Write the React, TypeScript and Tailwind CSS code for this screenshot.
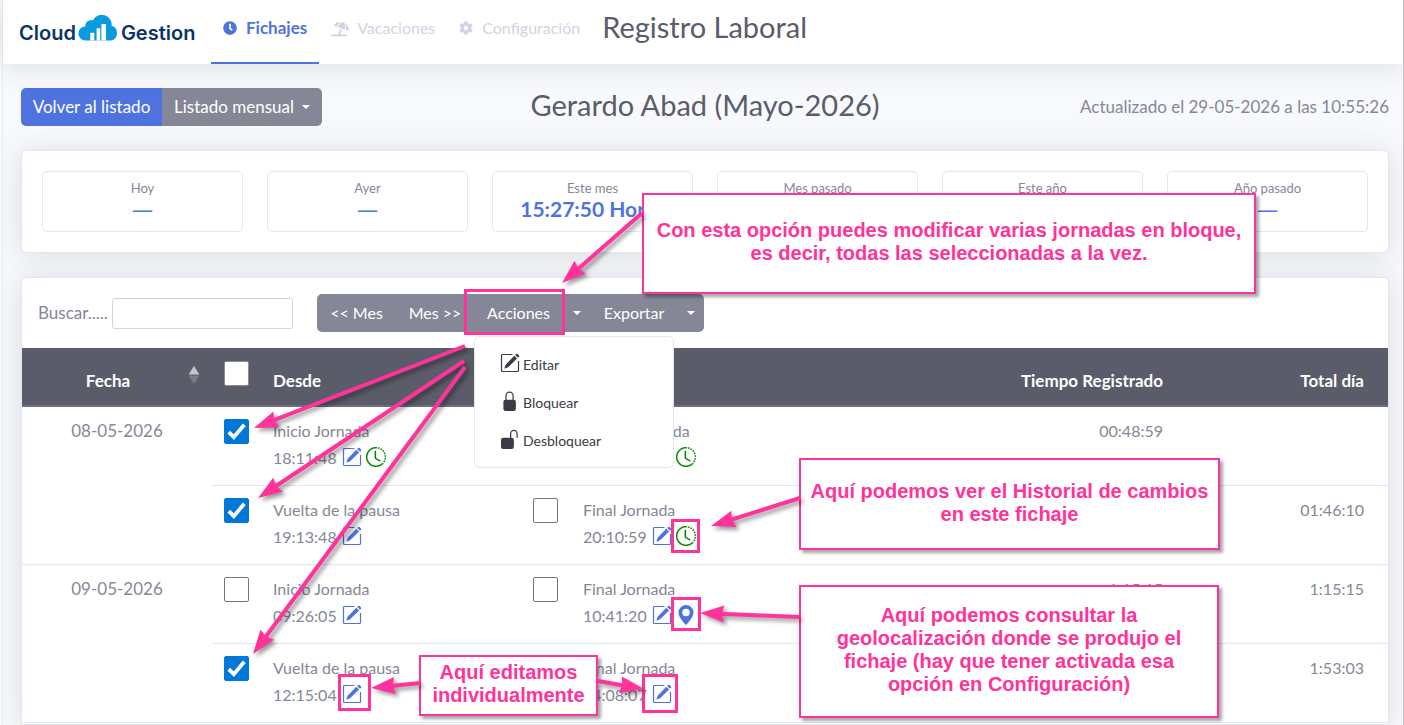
import * as React from 'react'
import { FaClock, FaCog, FaUmbrellaBeach } from 'react-icons/fa'
import { BsClockHistory, BsGeoAltFill } from 'react-icons/bs'
import { clsx } from 'clsx'

interface Punch {
  label: string
  time: string
  checked?: boolean
  history?: boolean
  geo?: boolean
}

interface Shift {
  date?: string
  from: Punch
  to: Punch
  registered?: string
  total?: string
}

const summary = [
  { label: 'Hoy' },
  { label: 'Ayer' },
  { label: 'Este mes', value: '15:27:50 Horas' },
  { label: 'Mes pasado' },
  { label: 'Este año' },
  { label: 'Año pasado' },
]

// A shift with a date opens a new day, the date cell spans two rows
const shifts: Shift[] = [
  {
    date: '08-05-2026',
    from: { label: 'Inicio Jornada', time: '18:11:48', checked: true, history: true },
    to: { label: 'Parada Jornada', time: '19:00:47', history: true },
    registered: '00:48:59',
  },
  {
    from: { label: 'Vuelta de la pausa', time: '19:13:48', checked: true },
    to: { label: 'Final Jornada', time: '20:10:59', history: true },
    total: '01:46:10',
  },
  {
    date: '09-05-2026',
    from: { label: 'Inicio Jornada', time: '09:26:05' },
    to: { label: 'Final Jornada', time: '10:41:20', geo: true },
    registered: '1:15:15',
    total: '1:15:15',
  },
  {
    from: { label: 'Vuelta de la pausa', time: '12:15:04', checked: true },
    to: { label: 'Final Jornada', time: '14:08:07' },
    total: '1:53:03',
  },
]

function EditIcon({ className }: { className?: string }) {
  return (
    <svg className={className} width="20" height="20" viewBox="0 0 20 20" fill="none" aria-hidden="true">
      <path
        d="M12.500 1.500H2.500a1 1 0 0 0-1 1v15a1 1 0 0 0 1 1h15a1 1 0 0 0 1-1V8"
        stroke="currentColor"
        strokeWidth="1.200"
      />
      <path d="M14.300 2.700l2.800 2.800-9 8.800-3.800 1.400 1.300-4z" fill="currentColor" />
      <path d="M15.200 2l1-1a1 1 0 0 1 1.400 0l1.400 1.400a1 1 0 0 1 0 1.400l-1 1z" fill="currentColor" />
    </svg>
  )
}

function LockIcon() {
  return (
    <svg width="20" height="20" viewBox="0 0 16 16" fill="currentColor" aria-hidden="true">
      <rect width="10" height="9" x="2.700" y="7" rx="1.800" />
      <path d="M4.300 4a3.300 3.500 0 1 1 6.700 0v3.500h-1V4a2.300 2.500 0 0 0-4.700 0v3.500h-1V4z" />
    </svg>
  )
}

function UnlockIcon() {
  return (
    <svg width="20" height="20" viewBox="0 0 16 16" fill="currentColor" aria-hidden="true">
      <rect width="10.300" height="9" x="0.800" y="7" rx="1.800" />
      <path d="M8 4a3.100 3.500 0 1 1 6.200 0v3h-1V4a2.100 2.500 0 0 0-4.200 0v3.500H8V4z" />
    </svg>
  )
}

function Logo() {
  return (
    <a
      href="#"
      className="mt-[17px] flex h-8 w-[176px] items-center gap-[2px] font-[Inter,sans-serif] text-[20px] leading-8 font-semibold text-[#0a3468]"
    >
      <span>Cloud</span>
      <svg width="41" height="27" viewBox="0 0 41 27" className="mb-3 shrink-0" aria-hidden="true">
        <path
          d="M7.500 26.500a7 7 0 0 1-.2-14A5.800 5.800 0 0 1 15 6.400a9.800 9.800 0 0 1 18.600 5.400 7.600 7.600 0 0 1-.6 14.700z"
          fill="#0a9adf"
        />
        <path d="M12.300 18.800h4v7.700h-4zM18.600 14.300h3.600v12.200h-3.600zM23.400 10h4.600v16.500h-4.600z" fill="#fff" />
      </svg>
      <span>Gestion</span>
    </a>
  )
}

function Caret() {
  return (
    <svg width="8" height="24" viewBox="0 0 8 24" fill="currentColor" aria-hidden="true">
      <path d="M0 10h8l-4 4z" />
    </svg>
  )
}

function CheckBox({ label, checked = false, header = false }: { label: string; checked?: boolean; header?: boolean }) {
  const [on, setOn] = React.useState(checked)

  return (
    <label className="grid size-[25px]">
      <input
        type="checkbox"
        aria-label={label}
        checked={on}
        onChange={(e) => setOn(e.target.checked)}
        className={clsx(
          'col-start-1 row-start-1 size-[25px] appearance-none rounded-[2px] border',
          on && 'border-[#0078d7] bg-[#0078d7]',
          !on && 'bg-white',
          !on && (header ? 'border-[#8b8b90]' : 'border-[#767676]')
        )}
      />
      {on && (
        <svg
          viewBox="0 0 25 25"
          className="pointer-events-none col-start-1 row-start-1"
          fill="none"
          stroke="#fff"
          strokeWidth="3.800"
          aria-hidden="true"
        >
          <path d="M4.800 13.200l5 5L20.300 5.800" />
        </svg>
      )}
    </label>
  )
}

function PunchCells({ punch }: { punch: Punch }) {
  return (
    <>
      <td className="border-t border-[#e3e6f0] p-3 align-top">
        <CheckBox label={`${punch.label} ${punch.time}`} checked={punch.checked} />
      </td>
      <td className="border-t border-[#e3e6f0] p-3 align-top">
        <div className="leading-6">{punch.label}</div>
        <div className="flex h-[30px] items-center gap-1 leading-[30px]">
          <span className="w-[65px]">{punch.time}</span>
          <button type="button" aria-label="Editar fichaje" className="mb-[2px] text-[#4e73df]">
            <EditIcon />
          </button>
          {punch.history && (
            <button type="button" aria-label="Historial de cambios" className="mb-[2px] text-[#008000]">
              <BsClockHistory size={20} strokeWidth={0.2} />
            </button>
          )}
          {punch.geo && (
            <button type="button" aria-label="Ver geolocalización" className="mb-[2px] text-[#4e73df]">
              <BsGeoAltFill size={20} />
            </button>
          )}
        </div>
      </td>
    </>
  )
}

function TopBar() {
  return (
    <header className="relative z-10 flex h-16 items-start bg-white pl-4 shadow-[0_2px_28px_0_rgba(58,59,69,0.15)]">
      <Logo />
      <nav className="ml-4 flex h-16 text-base">
        <a
          href="#"
          className="flex items-start gap-[9px] border-b-2 border-[#4e73df] px-3 pt-4 text-[17px] leading-6 font-bold text-[#4e73df]"
        >
          <FaClock size={14} className="mt-[5px]" />
          Fichajes
        </a>
        <a href="#" className="flex items-start gap-2 px-3 pt-4 leading-6 text-[#d1d3e2]">
          <FaUmbrellaBeach size={18} className="mt-1" />
          Vacaciones
        </a>
        <a href="#" className="flex items-start gap-[9px] px-3 pt-4 leading-6 text-[#d1d3e2]">
          <FaCog size={14} className="mt-[5px]" />
          Configuración
        </a>
      </nav>
      <h1 className="ml-[10px] pt-[11px] text-[29px] leading-8 text-[#5a5c69]">Registro Laboral</h1>
    </header>
  )
}

function ActionsMenu() {
  const item = 'flex h-[38px] w-full items-center gap-[3px] px-[25px] text-left text-sm text-[#3a3b45]'

  return (
    <div className="absolute top-[42px] left-0 z-20 w-[200px] rounded-[5px] border border-[#e3e6f0] bg-white pt-[9px] pb-[7px]">
      <button type="button" className={item}>
        <EditIcon className="mb-1" />
        Editar
      </button>
      <button type="button" className={item}>
        <span className="mb-1">
          <LockIcon />
        </span>
        Bloquear
      </button>
      <button type="button" className={item}>
        <span className="mb-1">
          <UnlockIcon />
        </span>
        Desbloquear
      </button>
    </div>
  )
}

function Toolbar() {
  return (
    <div className="flex items-center p-4">
      <label htmlFor="search" className="w-[74px]">
        Buscar.....
      </label>
      <input
        id="search"
        type="text"
        className="h-[31px] w-[181px] rounded-[3px] border border-[#d1d3e2] bg-white px-2 text-sm"
      />
      <div className="ml-6 flex h-[38px] rounded-[5px] bg-[#858796] text-base text-white">
        <button type="button" className="w-[79px]">
          {'<< Mes'}
        </button>
        <button type="button" className="w-[78px]">
          {'Mes >>'}
        </button>
        <div className="relative flex">
          <button type="button" className="w-[89px]">
            Acciones
          </button>
          <button type="button" aria-label="Abrir acciones" className="flex w-[27px] items-center justify-center">
            <Caret />
          </button>
          <ActionsMenu />
        </div>
        <button type="button" className="w-[88px]">
          Exportar
        </button>
        <button type="button" aria-label="Abrir exportar" className="flex w-[26px] items-center justify-center">
          <Caret />
        </button>
      </div>
    </div>
  )
}

function ShiftTable() {
  const th = 'border-b-2 border-[#6c6e7e] p-3 align-bottom text-[17px] font-bold leading-6'

  return (
    <table className="w-full table-fixed border-collapse text-base">
      <colgroup>
        <col className="w-[190px]" />
        <col className="w-[49px]" />
        <col className="w-[260px]" />
        <col className="w-[50px]" />
        <col />
        <col className="w-[200px]" />
        <col className="w-[213px]" />
      </colgroup>
      <thead className="bg-[#5a5c69] text-white">
        <tr className="h-[58px]">
          <th className={th}>
            <div className="flex items-end gap-[6px]">
              <span className="flex-1 text-center">Fecha</span>
              <svg width="12" height="28" viewBox="0 0 12 28" aria-hidden="true">
                <path d="M6 1l5.500 8.500h-11z" fill="#c4c4c9" />
                <path d="M6 19l5.500-8.500h-11z" fill="#7c7d88" />
              </svg>
            </div>
          </th>
          <th className={clsx(th, 'pb-[19px]')}>
            <CheckBox label="Seleccionar todo" header />
          </th>
          <th className={clsx(th, 'text-left')}>Desde</th>
          <th className={th} aria-label="Seleccionar" />
          <th className={clsx(th, 'text-left')}>Hasta</th>
          <th className={clsx(th, 'text-right whitespace-nowrap')}>Tiempo Registrado</th>
          <th className={clsx(th, 'pr-6 text-right')}>Total día</th>
        </tr>
      </thead>
      <tbody className="border-b border-[#e3e6f0]">
        {shifts.map((shift) => (
          <tr key={shift.from.time} className="h-[79px]">
            {shift.date && (
              <td rowSpan={2} className="border-t border-[#e3e6f0] p-3 text-center align-top text-[17px] leading-6">
                {shift.date}
              </td>
            )}
            <PunchCells punch={shift.from} />
            <PunchCells punch={shift.to} />
            <td className="border-t border-[#e3e6f0] p-3 text-right align-top leading-6">{shift.registered}</td>
            <td className="border-t border-[#e3e6f0] p-3 pr-6 text-right align-top leading-6">{shift.total}</td>
          </tr>
        ))}
      </tbody>
    </table>
  )
}

// Tail and tip of every pointer arrow
const arrows = [
  { from: [642, 213], to: [562, 283] },
  { from: [465, 346], to: [254, 428] },
  { from: [464, 361], to: [258, 498] },
  { from: [465, 367], to: [253, 654] },
  { from: [420, 683], to: [371, 688] },
  { from: [598, 681], to: [644, 689] },
  { from: [800, 498], to: [711, 526] },
  { from: [799, 617], to: [700, 613] },
]

function Arrow({ from, to }: { from: number[]; to: number[] }) {
  const dx = from[0] - to[0]
  const dy = from[1] - to[1]
  const angle = (Math.atan2(dy, dx) * 180) / Math.PI
  const length = Math.hypot(dx, dy)

  return (
    <g transform={`translate(${to[0]} ${to[1]}) rotate(${angle})`}>
      <path d={`M18 0H${length}`} stroke="#ff3399" strokeWidth="4" />
      <path d="M0 0l24-8.500-2 8.500 2 8.500z" fill="#ff3399" />
    </g>
  )
}

function Callout({ className, children }: { className: string; children: React.ReactNode }) {
  return (
    <div
      className={clsx(
        'absolute flex items-center justify-center border-2 border-[#ff3399] bg-white pb-[3px] text-center',
        'font-[Liberation_Sans,Arial,sans-serif] text-[20px] leading-[23px] font-bold whitespace-nowrap text-[#ff3399]',
        'shadow-[3px_3px_3px_rgba(0,0,0,0.35)]',
        className
      )}
    >
      <p>{children}</p>
    </div>
  )
}

function Annotations() {
  const frame = 'absolute border-3 border-[#ff3399]'

  return (
    <div className="pointer-events-none absolute inset-0 z-30">
      <div className={clsx(frame, 'top-[289px] left-[464px] h-[46px] w-[101px]')} />
      <div className={clsx(frame, 'top-[519px] left-[671px] h-[34px] w-[29px]')} />
      <div className={clsx(frame, 'top-[597px] left-[671px] h-[34px] w-[30px]')} />
      <div className={clsx(frame, 'top-[674px] left-[338px] h-[37px] w-[33px]')} />
      <div className={clsx(frame, 'top-[674px] left-[642px] h-[39px] w-[36px]')} />
      <Callout className="top-[193px] left-[642px] h-[101px] w-[614px]">
        Con esta opción puedes modificar varias jornadas en bloque,
        <br />
        es decir, todas las seleccionadas a la vez.
      </Callout>
      <Callout className="top-[458px] left-[799px] h-[92px] w-[421px]">
        Aquí podemos ver el Historial de cambios
        <br />
        en este fichaje
      </Callout>
      <Callout className="top-[585px] left-[799px] h-[133px] w-[420px]">
        Aquí podemos consultar la
        <br />
        geolocalización donde se produjo el
        <br />
        fichaje (hay que tener activada esa
        <br />
        opción en Configuración)
      </Callout>
      <Callout className="top-[655px] left-[419px] h-[61px] w-[179px]">
        Aquí editamos
        <br />
        individualmente
      </Callout>
      <svg className="absolute inset-0 size-full drop-shadow-[3px_3px_2px_rgba(0,0,0,0.4)]" aria-hidden="true">
        {arrows.map((arrow, i) => (
          <Arrow key={i} {...arrow} />
        ))}
      </svg>
    </div>
  )
}

export default function App() {
  const card = 'rounded-[5px] border border-[#e3e6f0] bg-white shadow-[0_2px_28px_0_rgba(58,59,69,0.15)]'

  return (
    <div className="relative flex h-screen overflow-hidden border-r border-[#c4c4c8] bg-[#f8f9fc] font-[Lato,sans-serif] text-[17px] text-[#858796]">
      <div className="w-[3px] shrink-0 border-r border-[#ebecf1]" />
      <div className="flex min-w-0 flex-1 flex-col">
        <TopBar />
        <main className="flex flex-1 flex-col gap-6 pt-6 pr-[14px] pl-[18px]">
          <div className="grid grid-cols-[1fr_auto_1fr] items-center">
            <div className="flex h-[38px]">
              <button type="button" className="w-[141px] rounded-l-[5px] bg-[#4e73df] text-white">
                Volver al listado
              </button>
              <button
                type="button"
                className="flex w-[160px] items-center justify-center gap-2 rounded-r-[5px] bg-[#858796] text-white"
              >
                Listado mensual
                <Caret />
              </button>
            </div>
            <h2 className="pb-1 text-[29px] leading-[34px] text-[#5a5c69]">Gerardo Abad (Mayo-2026)</h2>
            <p className="text-right">Actualizado el 29-05-2026 a las 10:55:26</p>
          </div>

          <section className={clsx(card, 'grid grid-cols-6 gap-6 p-5')}>
            {summary.map(({ label, value }) => (
              <div key={label} className="rounded-[5px] border border-[#e3e6f0] pt-2 pb-[10px] text-center">
                <div className="text-[13px] leading-[17px]">{label}</div>
                <div
                  className={clsx(
                    'text-[21px] leading-6 text-[#4e73df]',
                    value ? 'font-bold' : 'font-[Open_Sans,sans-serif]'
                  )}
                >
                  {value ?? '—'}
                </div>
              </div>
            ))}
          </section>

          <section className={clsx(card, 'flex-1 rounded-b-none')}>
            <Toolbar />
            <ShiftTable />
          </section>
        </main>
      </div>
      <Annotations />
    </div>
  )
}
